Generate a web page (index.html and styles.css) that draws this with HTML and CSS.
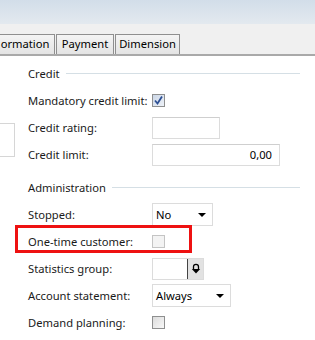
FILE: index.html
```html
<!DOCTYPE html>
<html>
<head>
<meta charset="utf-8">
<link rel="stylesheet" href="styles.css">
</head>
<body>
<div class="titlebar"></div>
<div class="tabbar">
  <div class="tab tab-first">ormation</div>
  <div class="tab tab-pay">Payment</div>
  <div class="tab tab-dim">Dimension</div>
</div>
<div class="content">
  <div class="leftcol"><div class="leftbox"></div></div>
  <div class="form">
    <div class="group">
      <div class="ghead"><span>Credit</span><div class="gline"></div></div>
      <div class="row"><div class="label">Mandatory credit limit:</div><div class="cb checked"><svg width="11" height="11" viewBox="0 0 11 11"><path d="M2 5.5 L4.5 8.5 L9 1.5" fill="none" stroke="#2c4f94" stroke-width="1.8"/></svg></div></div>
      <div class="row"><div class="label">Credit rating:</div><div class="input w68"></div></div>
      <div class="row"><div class="label">Credit limit:</div><div class="input w128 num">0,00</div></div>
    </div>
    <div class="group">
      <div class="ghead"><span>Administration</span><div class="gline"></div></div>
      <div class="row"><div class="label">Stopped:</div><div class="select w61"><span>No</span><i class="arrow"></i></div></div>
      <div class="row annotated"><div class="label">One-time customer:</div><div class="cb disabled"></div><div class="redbox"></div></div>
      <div class="row"><div class="label">Statistics group:</div><div class="lookup"><div class="lfield"></div><div class="lbtn"><svg width="12" height="12" viewBox="0 0 12 12"><path d="M3.5 6 V3.8 A2.5 2.5 0 0 1 8.5 3.8 V6" fill="none" stroke="#000" stroke-width="1.3"/><path d="M1.8 6 H10.2 L6 10.5 Z" fill="#000"/></svg></div></div></div>
      <div class="row"><div class="label">Account statement:</div><div class="select w78"><span>Always</span><i class="arrow"></i></div></div>
      <div class="row"><div class="label">Demand planning:</div><div class="cb"></div></div>
    </div>
  </div>
</div>
</body>
</html>
```
FILE: styles.css
```css
html, body {
  margin: 0;
  padding: 0;
  background: #ffffff;
  font-family: "Noto Sans", "Open Sans", sans-serif;
  font-size: 11.2px;
  color: #1a1a1a;
  overflow: hidden;
  width: 315px;
  height: 340px;
}
.titlebar {
  height: 24px;
  background: linear-gradient(#d2dde9, #e3e9ef);
}
.tabbar {
  height: 30px;
  background: #f0f0f0;
  display: flex;
  align-items: flex-end;
  border-bottom: 2px solid #a9a9a9;
  box-sizing: content-box;
}
.tab {
  height: 19px;
  line-height: 18px;
  border: 1px solid #8f8f8f;
  border-bottom: none;
  background: linear-gradient(#f4f4f4, #e4e4e4);
  margin-right: 1px;
  color: #000;
  box-sizing: content-box;
  text-align: center;
  white-space: nowrap;
}
.tab-first {
  margin-left: -5px;
  width: 58px;
}
.tab-pay { width: 56px; }
.tab-dim { width: 63px; }
.content {
  display: flex;
  padding-top: 4px;
}
.leftcol {
  width: 28px;
  flex: none;
}
.leftbox {
  margin-top: 63px;
  width: 14px;
  height: 32px;
  border: 1px solid #d6d6d6;
  border-left: none;
}
.form {
  display: flex;
  flex-direction: column;
  gap: 6px;
  width: 272px;
}
.group {
  display: flex;
  flex-direction: column;
}
.ghead {
  height: 27px;
  display: flex;
  align-items: center;
  gap: 6px;
}
.gline {
  flex: 1;
  height: 1px;
  background: #d5dfe5;
}
.row {
  height: 27px;
  display: flex;
  align-items: center;
  position: relative;
}
.label {
  width: 124px;
  flex: none;
  white-space: nowrap;
}
.cb {
  width: 11px;
  height: 11px;
  border: 1px solid #8e8f8f;
  background: linear-gradient(135deg, #dcdcdc, #f8f8f8);
  display: flex;
  align-items: center;
  justify-content: center;
}
.cb.checked {
  background: linear-gradient(135deg, #cbd6e6, #eef2f8);
}
.cb.disabled {
  border-color: #c4c4c4;
  background: #f3f3f3;
}
.input {
  border: 1px solid #dcdcdc;
  border-top-color: #cfcfcf;
  background: #fff;
  box-sizing: border-box;
  height: 22px;
}
.w68 { width: 68px; }
.w128 { width: 128px; }
.num {
  text-align: right;
  line-height: 20px;
  padding-right: 7px;
  color: #000;
}
.select {
  height: 23px;
  box-sizing: border-box;
  border: 1px solid #dcdcdc;
  display: flex;
  align-items: center;
  justify-content: space-between;
  padding: 0 6px 0 3px;
  color: #000;
}
.w61 { width: 61px; }
.w78 { width: 79px; }
.arrow {
  width: 0;
  height: 0;
  border-left: 4px solid transparent;
  border-right: 4px solid transparent;
  border-top: 4px solid #000;
}
.lookup {
  display: flex;
  height: 22px;
  box-sizing: border-box;
  border: 1px solid #dcdcdc;
  width: 52px;
}
.lfield {
  flex: 1;
}
.lbtn {
  width: 15px;
  background: #e2e2e2;
  border-left: 1px solid #444;
  display: flex;
  align-items: center;
  justify-content: center;
}
.redbox {
  position: absolute;
  left: -13px;
  top: -3px;
  width: 171px;
  height: 22px;
  border: 3px solid #ee1111;
}
```
